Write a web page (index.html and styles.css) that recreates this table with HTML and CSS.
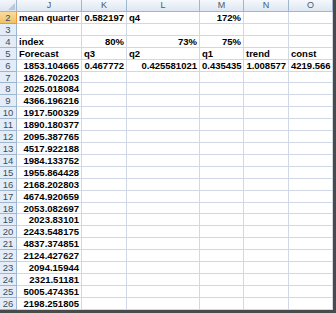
FILE: index.html
```html
<!DOCTYPE html>
<html>
<head>
<meta charset="utf-8">
<link rel="stylesheet" href="styles.css">
</head>
<body>
<div class="frame">
<div class="sheet">
  <div class="corner"><span class="tri"></span></div>
  <div class="ch">J</div><div class="ch">K</div><div class="ch">L</div><div class="ch">M</div><div class="ch">N</div><div class="ch">O</div>

  <div class="rh sel">2</div><div class="c">mean quarter</div><div class="c n">0.582197</div><div class="c">q4</div><div class="c n">172%</div><div class="c"></div><div class="c"></div>
  <div class="rh">3</div><div class="c"></div><div class="c"></div><div class="c"></div><div class="c"></div><div class="c"></div><div class="c"></div>
  <div class="rh">4</div><div class="c">index</div><div class="c n">80%</div><div class="c n">73%</div><div class="c n">75%</div><div class="c"></div><div class="c"></div>
  <div class="rh">5</div><div class="c">Forecast</div><div class="c">q3</div><div class="c">q2</div><div class="c">q1</div><div class="c">trend</div><div class="c">const</div>
  <div class="rh">6</div><div class="c n">1853.104665</div><div class="c n">0.467772</div><div class="c n">0.425581021</div><div class="c n">0.435435</div><div class="c n">1.008577</div><div class="c n">4219.566</div>
  <div class="rh">7</div><div class="c n">1826.702203</div><div class="c"></div><div class="c"></div><div class="c"></div><div class="c"></div><div class="c"></div>
  <div class="rh">8</div><div class="c n">2025.018084</div><div class="c"></div><div class="c"></div><div class="c"></div><div class="c"></div><div class="c"></div>
  <div class="rh">9</div><div class="c n">4366.196216</div><div class="c"></div><div class="c"></div><div class="c"></div><div class="c"></div><div class="c"></div>
  <div class="rh">10</div><div class="c n">1917.500329</div><div class="c"></div><div class="c"></div><div class="c"></div><div class="c"></div><div class="c"></div>
  <div class="rh">11</div><div class="c n">1890.180377</div><div class="c"></div><div class="c"></div><div class="c"></div><div class="c"></div><div class="c"></div>
  <div class="rh">12</div><div class="c n">2095.387765</div><div class="c"></div><div class="c"></div><div class="c"></div><div class="c"></div><div class="c"></div>
  <div class="rh">13</div><div class="c n">4517.922188</div><div class="c"></div><div class="c"></div><div class="c"></div><div class="c"></div><div class="c"></div>
  <div class="rh">14</div><div class="c n">1984.133752</div><div class="c"></div><div class="c"></div><div class="c"></div><div class="c"></div><div class="c"></div>
  <div class="rh">15</div><div class="c n">1955.864428</div><div class="c"></div><div class="c"></div><div class="c"></div><div class="c"></div><div class="c"></div>
  <div class="rh">16</div><div class="c n">2168.202803</div><div class="c"></div><div class="c"></div><div class="c"></div><div class="c"></div><div class="c"></div>
  <div class="rh">17</div><div class="c n">4674.920659</div><div class="c"></div><div class="c"></div><div class="c"></div><div class="c"></div><div class="c"></div>
  <div class="rh">18</div><div class="c n">2053.082697</div><div class="c"></div><div class="c"></div><div class="c"></div><div class="c"></div><div class="c"></div>
  <div class="rh">19</div><div class="c n">2023.83101</div><div class="c"></div><div class="c"></div><div class="c"></div><div class="c"></div><div class="c"></div>
  <div class="rh">20</div><div class="c n">2243.548175</div><div class="c"></div><div class="c"></div><div class="c"></div><div class="c"></div><div class="c"></div>
  <div class="rh">21</div><div class="c n">4837.374851</div><div class="c"></div><div class="c"></div><div class="c"></div><div class="c"></div><div class="c"></div>
  <div class="rh">22</div><div class="c n">2124.427627</div><div class="c"></div><div class="c"></div><div class="c"></div><div class="c"></div><div class="c"></div>
  <div class="rh">23</div><div class="c n">2094.15944</div><div class="c"></div><div class="c"></div><div class="c"></div><div class="c"></div><div class="c"></div>
  <div class="rh">24</div><div class="c n">2321.51181</div><div class="c"></div><div class="c"></div><div class="c"></div><div class="c"></div><div class="c"></div>
  <div class="rh">25</div><div class="c n">5005.474351</div><div class="c"></div><div class="c"></div><div class="c"></div><div class="c"></div><div class="c"></div>
  <div class="rh">26</div><div class="c n">2198.251805</div><div class="c"></div><div class="c"></div><div class="c"></div><div class="c"></div><div class="c"></div>
</div>
</div>
</body>
</html>
```

FILE: styles.css
```css
html, body {
  margin: 0;
  padding: 0;
  background: #ffffff;
}
.frame {
  width: 336px;
  height: 313px;
  box-sizing: border-box;
  border-right: 3px solid #4a4a4a;
  border-bottom: 3px solid #4a4a4a;
  overflow: hidden;
  background: #ffffff;
}
.sheet {
  display: grid;
  grid-template-columns: 17px 65px 45px 73px 44px 45px 44px;
  grid-template-rows: 12px repeat(25, 11.92px);
  font-family: "Liberation Sans", Arial, sans-serif;
}
.corner {
  position: relative;
  background: linear-gradient(#f3f6fb, #dde5f0);
  border-right: 1px solid #9eb6ce;
  border-bottom: 1px solid #9eb6ce;
  box-sizing: border-box;
}
.tri {
  position: absolute;
  right: 1px;
  bottom: 1px;
  width: 0;
  height: 0;
  border-left: 7px solid transparent;
  border-bottom: 7px solid #b8c9dc;
}
.ch {
  background: linear-gradient(#f5f8fc, #dde6f1);
  border-right: 1px solid #9eb6ce;
  border-bottom: 1px solid #9eb6ce;
  box-sizing: border-box;
  color: #4a5a6e;
  font-size: 9px;
  text-align: center;
  line-height: 11px;
}
.rh {
  background: #e4ecf7;
  border-right: 1px solid #9eb6ce;
  border-bottom: 1px solid #9eb6ce;
  box-sizing: border-box;
  color: #3c4c63;
  font-size: 9.5px;
  text-align: center;
  line-height: 11px;
}
.rh.sel {
  background: linear-gradient(#f9dca2, #f1c15f);
  border-bottom-color: #f29536;
  border-right-color: #f29536;
}
.c {
  border-right: 1px solid #d0d7e5;
  border-bottom: 1px solid #d0d7e5;
  box-sizing: border-box;
  font-size: 9.5px;
  font-weight: bold;
  color: #000;
  line-height: 11px;
  padding: 0 2px;
  white-space: nowrap;
  overflow: hidden;
}
.c.n {
  text-align: right;
}
```
